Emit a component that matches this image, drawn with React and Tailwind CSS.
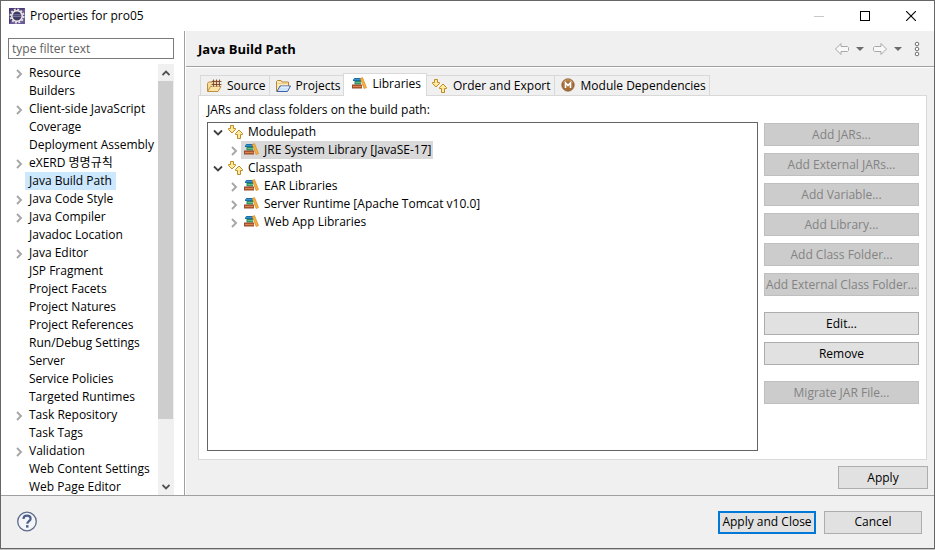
import React from 'react'

const pages = [
  { name: 'Resource', expandable: true },
  { name: 'Builders' },
  { name: 'Client-side JavaScript', expandable: true },
  { name: 'Coverage' },
  { name: 'Deployment Assembly' },
  { name: 'eXERD 명명규칙', expandable: true },
  { name: 'Java Build Path', selected: true },
  { name: 'Java Code Style', expandable: true },
  { name: 'Java Compiler', expandable: true },
  { name: 'Javadoc Location' },
  { name: 'Java Editor', expandable: true },
  { name: 'JSP Fragment' },
  { name: 'Project Facets' },
  { name: 'Project Natures' },
  { name: 'Project References' },
  { name: 'Run/Debug Settings' },
  { name: 'Server' },
  { name: 'Service Policies' },
  { name: 'Targeted Runtimes' },
  { name: 'Task Repository', expandable: true },
  { name: 'Task Tags' },
  { name: 'Validation', expandable: true },
  { name: 'Web Content Settings' },
  { name: 'Web Page Editor' },
]

const tabs = [
  { name: 'Source', icon: SourceIcon },
  { name: 'Projects', icon: ProjectsIcon },
  { name: 'Libraries', icon: BooksIcon, active: true },
  { name: 'Order and Export', icon: OrderIcon },
  { name: 'Module Dependencies', icon: ModuleIcon },
]

const buildPath = [
  { name: 'Modulepath', children: [{ name: 'JRE System Library [JavaSE-17]', selected: true }] },
  {
    name: 'Classpath',
    children: [
      { name: 'EAR Libraries' },
      { name: 'Server Runtime [Apache Tomcat v10.0]' },
      { name: 'Web App Libraries' },
    ],
  },
]

const actionGroups = [
  {
    disabled: true,
    labels: [
      'Add JARs...',
      'Add External JARs...',
      'Add Variable...',
      'Add Library...',
      'Add Class Folder...',
      'Add External Class Folder...',
    ],
  },
  { disabled: false, labels: ['Edit...', 'Remove'] },
  { disabled: true, labels: ['Migrate JAR File...'] },
]

function Svg({ children, className = '' }) {
  return (
    <svg width="16" height="16" viewBox="0 0 16 16" fill="none" aria-hidden="true" className={`shrink-0 ${className}`}>
      {children}
    </svg>
  )
}

function EclipseIcon() {
  return (
    <Svg>
      <rect width="16" height="16" fill="#4b3b78" />
      <path d="M0 16 16 0v16z" fill="#6b5a9a" />
      <circle cx="8" cy="8" r="6.6" stroke="#e4e0dc" strokeWidth="1.8" strokeDasharray="2 1.46" />
      <circle cx="8" cy="8" r="5.2" fill="#3d3963" stroke="#f4f1ec" strokeWidth="1.5" />
      <path d="M4 6.8h8M4 8.6h8" stroke="#8d8bb0" strokeWidth=".8" />
    </Svg>
  )
}

function SourceIcon() {
  return (
    <Svg>
      <path d="M1.500 13V5.500l1-1.500h3l1 1H13v3" fill="#f7dc9a" stroke="#c08f3e" />
      <path d="M1.500 13.500 4.500 8.500h10.500l-3 5z" fill="#fbe3a6" stroke="#c08f3e" />
      <rect x="6" y="2" width="8" height="6.500" fill="#ecd0ac" />
      <path d="M7.500 1.500v7M10.500 1.500v7M13.500 1.500v7M5.500 3.500h10M5.500 6.500h10" stroke="#76482a" strokeWidth=".9" />
    </Svg>
  )
}

function ProjectsIcon() {
  return (
    <Svg>
      <path d="M1.5 13.5v-10l1-1H6l1 1.500h6.500v4" fill="#fbeab8" stroke="#b98434" />
      <path d="M2.500 5.500h10" stroke="#f0cf85" />
      <path d="M2 13.5 5 8h10.500l-3 5.500z" fill="#cfe3fb" stroke="#3b62ad" />
      <path d="M6 9h8" stroke="#f4f9ff" />
    </Svg>
  )
}

function BooksIcon() {
  return (
    <Svg>
      <path d="M2 3.500 3.500 2H10v3H2z" fill="#1a6ea8" />
      <path d="M3 3.500h6.500" stroke="#3d96c8" strokeWidth=".9" />
      <path d="M3.500 5H10v3.500H3.500z" fill="#2a8a5c" />
      <path d="M4.500 6.700H10" stroke="#7cc79a" />
      <path d="M1 8.500h10v4H1z" fill="#9c4a28" />
      <path d="M2 10.500h8.500" stroke="#d9834f" strokeWidth="1.400" />
      <path d="m9.300 2.400 2.200-.8 4 10-2.400.9z" fill="#f5b244" stroke="#d68a22" strokeWidth=".7" />
    </Svg>
  )
}

function OrderIcon() {
  return (
    <Svg>
      <path d="M2.500 1.500h3v3h2v1L4 9 .5 5.500v-1h2z" fill="#ffeb9c" stroke="#c08a26" />
      <path d="M9.500 14.500h3v-4h2v-1L11 6 7.500 9.500v1h2z" fill="#ffeb9c" stroke="#c08a26" />
    </Svg>
  )
}

function ModuleIcon() {
  return (
    <Svg>
      <circle cx="8" cy="7" r="6.2" fill="#a8703c" stroke="#8a5a30" strokeWidth=".8" />
      <path d="M3.5 4.5a5.2 5.2 0 0 1 9 0" stroke="#cda070" />
      <path d="M5.5 10V4.8L8 7.5l2.500-2.700V10" stroke="#fff" strokeWidth="1.600" />
    </Svg>
  )
}

function Chevron({ open }) {
  return (
    <Svg>
      {open ? (
        <path d="m4 6.500 4 4 4-4" stroke="#404040" strokeWidth="1.800" />
      ) : (
        <path d="m7 5 4 4-4 4" stroke="#a6a6a6" strokeWidth="1.900" />
      )}
    </Svg>
  )
}

function TitleBar() {
  return (
    <header className="flex h-[30px] shrink-0 items-center bg-white pl-2">
      <EclipseIcon />
      <h1 className="ml-[5px] flex-1">Properties for pro05</h1>
      <button aria-label="Minimize" disabled className="flex h-full w-[46px] items-center justify-center">
        <svg width="10" height="10"><path d="M0 5.500h10" stroke="#c8c8c8" /></svg>
      </button>
      <button aria-label="Maximize" className="flex h-full w-[46px] items-center justify-center">
        <svg width="10" height="10"><rect x=".5" y=".5" width="9" height="9" fill="none" stroke="#000" /></svg>
      </button>
      <button aria-label="Close" className="flex h-full w-[46px] items-center justify-center">
        <svg width="10" height="10"><path d="m0 0 10 10M10 0 0 10" stroke="#000" strokeWidth="1.100" /></svg>
      </button>
    </header>
  )
}

function Sidebar() {
  return (
    <aside className="flex w-[184px] shrink-0 flex-col border-r border-[#a0a0a0] bg-white pt-[7px] pr-[10px] pl-[7px]">
      <input
        type="text"
        aria-label="Filter"
        placeholder="type filter text"
        className="h-[21px] w-full shrink-0 border border-[#7a7a7a] bg-white px-[3px] outline-none placeholder:text-[#606060]"
      />
      <div className="mt-[5px] flex min-h-0 flex-1">
        <ul className="min-w-0 flex-1 overflow-hidden">
          {pages.map(page => (
            <li key={page.name} className="flex h-[18px] items-center pl-[2px]">
              <span className="w-[15px] shrink-0">{page.expandable && <Chevron />}</span>
              <span className={`px-1 whitespace-nowrap ${page.selected ? 'bg-[#cce8ff]' : ''}`}>{page.name}</span>
            </li>
          ))}
        </ul>
        <div className="flex w-4 shrink-0 flex-col bg-[#f0f0f0]">
          <span className="flex h-[17px] items-center justify-center">
            <svg width="8" height="6"><path d="m.5 5 3.500-3.500L7.500 5" fill="none" stroke="#505050" strokeWidth="1.800" /></svg>
          </span>
          <div className="mr-px flex-[338] bg-[#cdcdcd]" />
          <div className="flex-[59]" />
          <span className="flex h-[17px] items-center justify-center">
            <svg width="8" height="6"><path d="m.5 1 3.500 3.500L7.500 1" fill="none" stroke="#505050" strokeWidth="1.800" /></svg>
          </span>
        </div>
      </div>
    </aside>
  )
}

function PageHeader() {
  return (
    <div className="flex h-[36px] shrink-0 items-center border-b border-[#a0a0a0] pr-[14px] pl-[12px]">
      <h2 className="flex-1 text-[13px] font-bold">Java Build Path</h2>
      <button aria-label="Back">
        <Svg><path d="M1.500 8 7 2.500v3h6.500l1 1v3l-1 1H7v3z" fill="#f8f8f8" stroke="#a8a8a8" /></Svg>
      </button>
      <button aria-label="Back history" className="ml-[6px]">
        <svg width="8" height="4"><path d="M0 0h8L4 4z" fill="#6b6b6b" /></svg>
      </button>
      <button aria-label="Forward" className="ml-[8px]">
        <Svg><path d="M14.500 8 9 2.500v3H2.500l-1 1v3l1 1H9v3z" fill="#f8f8f8" stroke="#a8a8a8" /></Svg>
      </button>
      <button aria-label="Forward history" className="ml-[6px]">
        <svg width="8" height="4"><path d="M0 0h8L4 4z" fill="#6b6b6b" /></svg>
      </button>
      <button aria-label="Menu" className="ml-[12px]">
        <svg width="6" height="16" fill="#fff" stroke="#707070">
          <circle cx="3" cy="3" r="1.800" />
          <circle cx="3" cy="8" r="1.800" />
          <circle cx="3" cy="13" r="1.800" />
        </svg>
      </button>
    </div>
  )
}

function TabBar() {
  return (
    <div role="tablist" className="flex items-end pl-[2px]">
      {tabs.map(({ name, icon: Icon, active }) => (
        <button
          key={name}
          role="tab"
          aria-selected={Boolean(active)}
          className={
            active
              ? 'relative -mb-px -ml-px flex h-[23px] items-center gap-[5px] border border-b-0 border-[#d9d9d9] bg-white pr-[5px] pl-[7px] pb-[2px]'
              : '-ml-px flex h-[20px] items-center gap-[5px] border border-b-0 border-[#d9d9d9] pr-[3px] pl-[5px] first:ml-0'
          }
        >
          <Icon />
          <span className="whitespace-nowrap">{name}</span>
        </button>
      ))}
    </div>
  )
}

function LibraryTree() {
  return (
    <ul className="min-w-0 flex-1 overflow-hidden border border-[#646464] bg-white pl-[2px]">
      {buildPath.map(node => (
        <li key={node.name}>
          <div className="flex h-[18px] items-center">
            <Chevron open />
            <span className="ml-[2px]"><OrderIcon /></span>
            <span className="ml-[4px]">{node.name}</span>
          </div>
          <ul className="pl-[15px]">
            {node.children.map(child => (
              <li key={child.name} className="flex h-[18px] items-center">
                <Chevron />
                <span className={`flex h-full items-center gap-[5px] pr-[2px] pl-[2px] whitespace-nowrap ${child.selected ? 'bg-[#d9d9d9]' : ''}`}>
                  <BooksIcon />
                  {child.name}
                </span>
              </li>
            ))}
          </ul>
        </li>
      ))}
    </ul>
  )
}

function ActionButtons() {
  return (
    <div className="flex w-[155px] shrink-0 flex-col gap-[16px] pt-px">
      {actionGroups.map(group => (
        <div key={group.labels[0]} className="flex flex-col gap-[7px]">
          {group.labels.map(label => (
            <button
              key={label}
              disabled={group.disabled}
              className={`h-[23px] border whitespace-nowrap ${
                group.disabled ? 'border-[#bfbfbf] bg-[#cccccc] text-[#838383]' : 'border-[#adadad] bg-[#e1e1e1]'
              }`}
            >
              {label}
            </button>
          ))}
        </div>
      ))}
    </div>
  )
}

function Footer() {
  return (
    <footer className="flex h-[53px] shrink-0 items-center gap-2 border-t border-[#a0a0a0] pr-3 pl-[15px]">
      <button aria-label="Help" className="mr-auto">
        <svg width="22" height="22" viewBox="0 0 22 22" fill="none">
          <circle cx="11" cy="10.500" r="9.300" fill="#f4f5f8" stroke="#5d6b8c" strokeWidth="1.300" />
          <path d="M7.500 8c0-2.200 1.500-3.300 3.500-3.300s3.600 1.100 3.600 3c0 2.300-3.300 2.600-3.300 5" stroke="#4d5f88" strokeWidth="2.200" />
          <rect x="10" y="14.200" width="2.500" height="2.400" fill="#4d5f88" />
        </svg>
      </button>
      <button className="h-[23px] w-[98px] border-2 border-[#0078d7] bg-[#e1e1e1] whitespace-nowrap">Apply and Close</button>
      <button className="h-[23px] w-[98px] border border-[#adadad] bg-[#e1e1e1]">Cancel</button>
    </footer>
  )
}

export default function App() {
  return (
    <div className="h-screen bg-[#c4c4c4] pb-px font-['Open_Sans','Noto_Sans_CJK_KR',sans-serif] text-[12px] leading-[18px] text-black">
      <div className="flex h-full flex-col border border-[#666666] bg-[#f0f0f0]">
        <TitleBar />
        <div className="flex min-h-0 flex-1">
          <Sidebar />
          <main className="flex min-w-0 flex-1 flex-col border-l border-white">
            <PageHeader />
            <section className="flex min-h-0 flex-1 flex-col border-t border-white pt-[5px] pr-[6px] pb-[6px] pl-[12px]">
              <TabBar />
              <div className="mr-px flex min-h-0 flex-1 flex-col border border-[#d9d9d9] bg-white pt-[5px] pr-[7px] pb-[8px] pl-[8px]">
                <p className="mb-[3px]">JARs and class folders on the build path:</p>
                <div className="flex min-h-0 flex-1 gap-[6px]">
                  <LibraryTree />
                  <ActionButtons />
                </div>
              </div>
              <button className="mt-[6px] h-[23px] w-[90px] shrink-0 self-end border border-[#adadad] bg-[#e1e1e1]">Apply</button>
            </section>
          </main>
        </div>
        <Footer />
      </div>
    </div>
  )
}
